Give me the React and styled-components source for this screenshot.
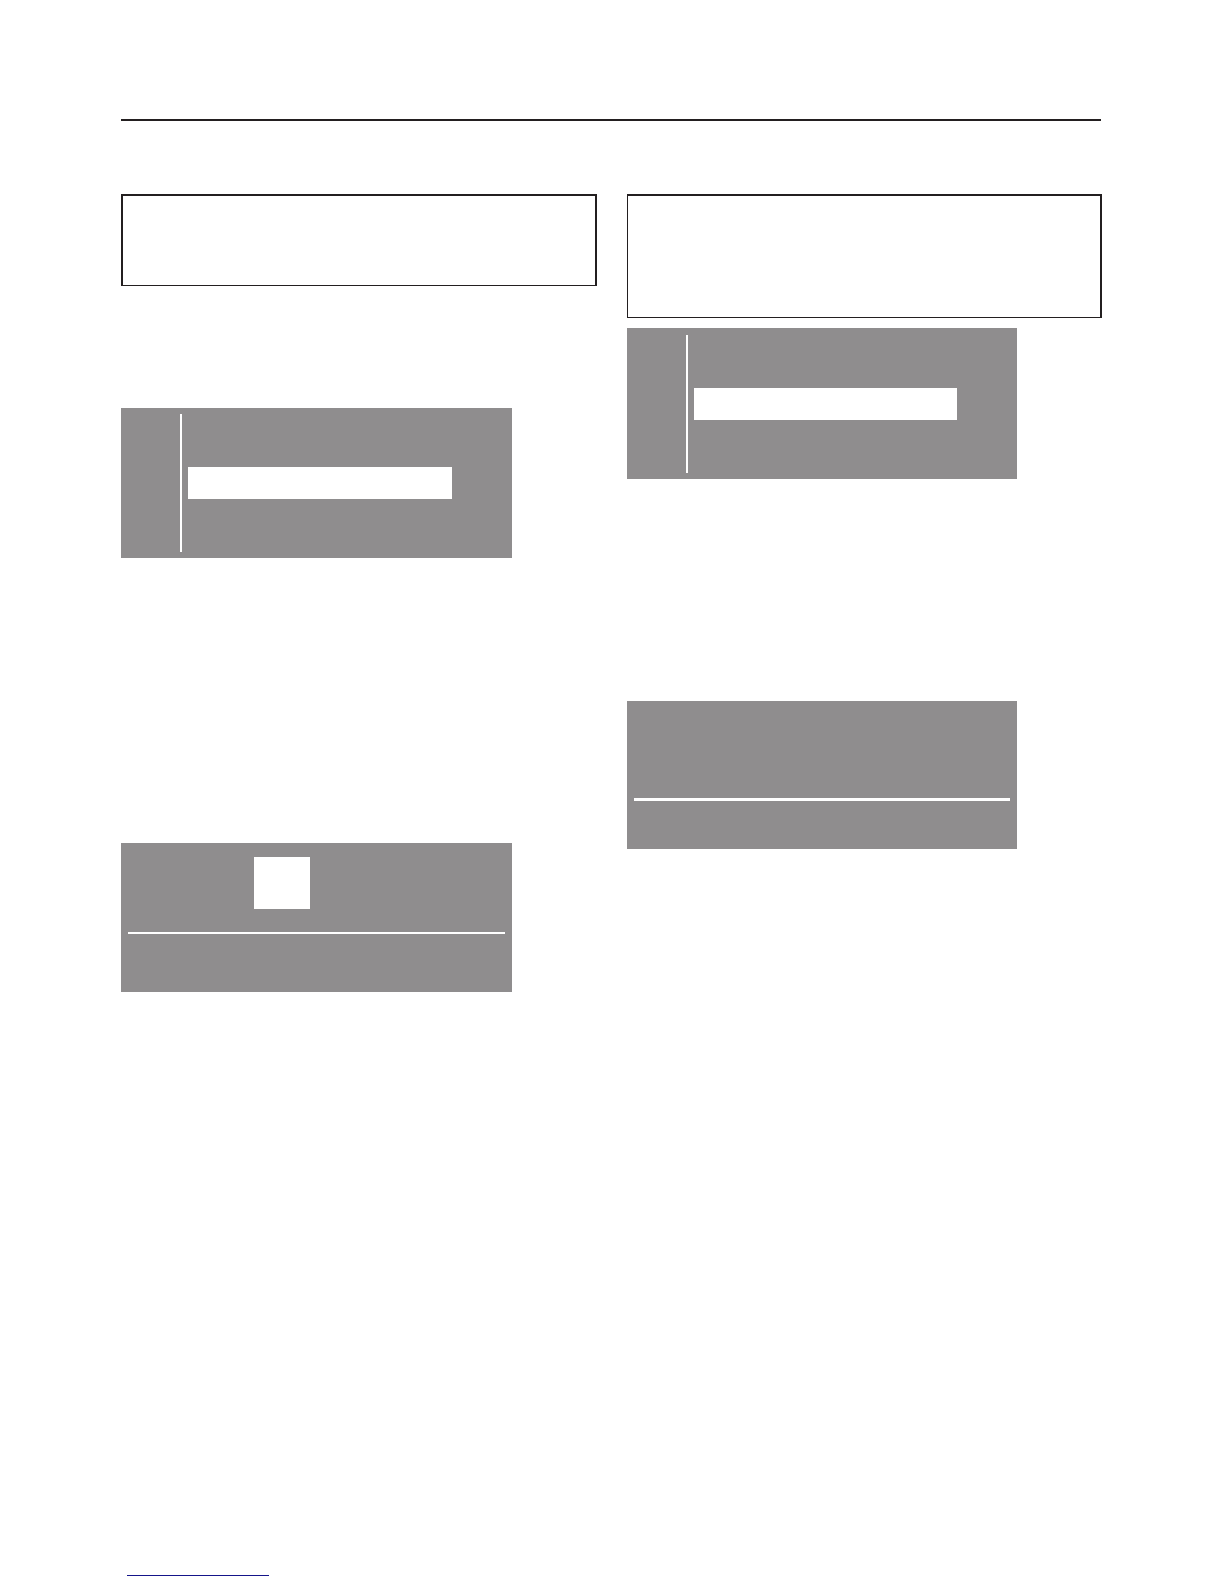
import styled, { createGlobalStyle } from "styled-components"

function MenuScreen({ width, bottom, top }){
    return <Screen $width={width}>
        <MenuGrid $top={top} $bottom={bottom}>
            <Divider />
            <MenuList>
                <SelectedItem />
            </MenuList>
        </MenuGrid>
    </Screen>
}

function App(){

    return <>
        <GlobalStyle />
        <Page>
            <Header />
            <Columns>
                <Column>
                    <TitleBox $height={92} $left={2} />
                    <Steps $height={122} />
                    <MenuScreen width={391} top={6} bottom={6} />
                    <Steps $height={285} />
                    <Screen $width={391}>
                        <DigitArea $height={89}>
                            <Digit />
                        </DigitArea>
                        <Line $thickness={2} />
                        <Caption $height={58} />
                    </Screen>
                </Column>
                <Column>
                    <TitleBox $height={124} $left={1} />
                    <Steps $height={10} />
                    <MenuScreen width={390} top={7} bottom={6} />
                    <Steps $height={222} />
                    <Screen $width={390}>
                        <DigitArea $height={97} />
                        <Line $thickness={3} />
                        <Caption $height={48} />
                    </Screen>
                </Column>
            </Columns>
            <Footer>
                <FooterLink href="#" aria-label="Website" />
            </Footer>
        </Page>
    </>
}

export default App

const GlobalStyle = createGlobalStyle`
* {
    box-sizing: border-box;
}
body {
    margin: 0;
    background: #fff;
    font-family: "Liberation Sans", Arial, sans-serif;
}
`

const Page = styled.div`
display: flex;
flex-direction: column;
min-height: 100vh;
padding: 0 122px 8px 121px;
`

const Header = styled.header`
height: 121px;
margin-right: 1px;
border-bottom: 2px solid #231f20;
`

const Columns = styled.main`
display: grid;
grid-template-columns: 476fr 475fr;
column-gap: 30px;
padding-top: 73px;
`

const Column = styled.section`
min-width: 0;
`

const TitleBox = styled.div`
height: ${({ $height }) => $height}px;
border: solid #231f20;
border-width: 2px 2px 1px ${({ $left }) => $left}px;
`

// blank room for the instructions between the displays
const Steps = styled.div`
height: ${({ $height }) => $height}px;
`

const Screen = styled.div`
width: ${({ $width }) => $width}px;
max-width: 100%;
background: #8f8d8e;
`

const MenuGrid = styled.div`
display: grid;
grid-template-columns: 2px 1fr;
column-gap: 6px;
padding: ${({ $top, $bottom }) => `${$top}px 60px ${$bottom}px 59px`};
`

const Divider = styled.div`
height: 138px;
background: #fff;
`

const MenuList = styled.div`
display: flex;
align-items: center;
`

const SelectedItem = styled.div`
flex: 1;
height: 32px;
background: #fff;
`

const DigitArea = styled.div`
height: ${({ $height }) => $height}px;
padding: 14px 0 0 133px;
`

const Digit = styled.div`
width: 56px;
height: 52px;
background: #fff;
`

const Line = styled.div`
height: ${({ $thickness }) => $thickness}px;
margin: 0 7px;
background: #fff;
`

const Caption = styled.div`
height: ${({ $height }) => $height}px;
`

const Footer = styled.footer`
display: flex;
margin-top: auto;
padding-left: 6px;
`

const FooterLink = styled.a`
width: 142px;
height: 20px;
border-bottom: 1px solid #15158a;
`
